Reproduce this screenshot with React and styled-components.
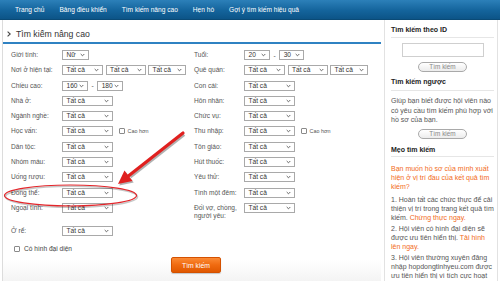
import React from 'react';
import styled, { createGlobalStyle } from 'styled-components';

const Global = createGlobalStyle`
  html, body { margin: 0; padding: 0; background: #fff; overflow: hidden; }
  body { font-family: "Liberation Sans", Arial, sans-serif; }
  * { box-sizing: border-box; }
`;

const Page = styled.div`
  position: relative;
  width: 500px;
  height: 281px;
  overflow: hidden;
  display: flex;
  flex-direction: column;
`;

const NavBar = styled.nav`
  height: 20px;
  flex: none;
  display: flex;
  align-items: center;
  gap: 15px;
  padding-left: 15px;
  background: linear-gradient(#2c80b9, #14649c 55%, #0c5487);
  border-bottom: 1px solid #0a4a76;
`;

const NavItem = styled.a`
  color: #fff;
  font-size: 6.6px;
  text-decoration: none;
  white-space: nowrap;
`;

const Body = styled.div`
  flex: 1;
  display: flex;
  min-height: 0;
`;

const Main = styled.main`
  width: 379px;
  flex: none;
  margin-left: 2px;
  border-left: 1px solid #dcdcdc;
  background: linear-gradient(#fff 0, #fff 240px, #ececec 275px);
  display: flex;
  flex-direction: column;
  & > * { flex-shrink: 0; }
`;

const Title = styled.h1`
  margin: 0;
  display: flex;
  align-items: center;
  gap: 5px;
  padding: 8px 0 2px 4px;
  border-bottom: 2px solid #2f82c2;
  font-size: 8.7px;
  line-height: 12px;
  font-weight: normal;
  color: #333;
`;

const Form = styled.div`
  padding: 6px 0 0 8px;
  display: flex;
  flex-direction: column;
  & > * { flex-shrink: 0; }
`;

const Row = styled.div`
  display: grid;
  grid-template-columns: 51px 132px 50px 1fr;
  height: ${(p) => p.$h || 15.3}px;
  align-items: start;
`;

const Label = styled.span`
  font-size: 6.6px;
  line-height: ${(p) => (p.$multi ? '8.2px' : '10px')};
  color: #555;
  white-space: ${(p) => (p.$multi ? 'normal' : 'nowrap')};
  padding-top: ${(p) => (p.$multi ? '1px' : '0')};
`;

const Cell = styled.div`
  display: flex;
  align-items: center;
  height: 10px;
  gap: 2.5px;
`;

const SelectBox = styled.div`
  width: ${(p) => p.$w}px;
  height: 10px;
  flex: none;
  border: 1px solid #a9a9a9;
  background: #fff;
  display: flex;
  align-items: center;
  justify-content: space-between;
  padding: 0 3px 0 3.5px;
  font-size: 6.6px;
  color: #333;
  line-height: 8px;
`;

const Dash = styled.span`
  font-size: 6.6px;
  color: #555;
  padding: 0 1px;
`;

const Box = styled.span`
  display: inline-block;
  width: 6px;
  height: 6px;
  border: 1px solid #8a8a8a;
  border-radius: 1px;
  background: #fff;
  flex: none;
`;

const CheckSmall = styled.span`
  display: flex;
  align-items: center;
  gap: 3px;
  margin-left: 3px;
  font-size: 5.4px;
  color: #555;
`;

const CheckRow = styled.label`
  height: 15.3px;
  display: flex;
  align-items: center;
  gap: 4px;
  padding-left: 3px;
  font-size: 6.6px;
  color: #444;
`;

const SearchBtn = styled.button`
  align-self: center;
  margin-top: 0.5px;
  width: 50px;
  height: 16px;
  border: 1px solid #d45100;
  border-radius: 2px;
  background: linear-gradient(#fb8a34, #f06a10 50%, #e05800);
  color: #fff;
  font-family: inherit;
  font-size: 6.8px;
  padding: 0;
  box-shadow: 0 1px 1px rgba(0, 0, 0, 0.2);
`;

const Sidebar = styled.aside`
  width: 114px;
  flex: none;
  margin-left: 3px;
  border-left: 1px solid #e2e2e2;
  border-right: 1px solid #e2e2e2;
  padding: 5px 3px 0 6px;
  display: flex;
  flex-direction: column;
  background: #fff;
  & > * { flex-shrink: 0; }
`;

const SideHeading = styled.h3`
  margin: ${(p) => p.$mt || 0}px 0 0;
  font-size: 7px;
  line-height: 10px;
  font-weight: bold;
  color: #222;
  padding-bottom: ${(p) => p.$pb ?? 2}px;
  border-bottom: 1px solid #e6e6e6;
`;

const IdInput = styled.div`
  align-self: center;
  margin-top: 5px;
  width: 82px;
  height: 14px;
  border: 1px solid #cfcfcf;
  background: #fff;
`;

const PillBtn = styled.button`
  align-self: center;
  margin-top: ${(p) => p.$mt || 5}px;
  width: 49px;
  height: 10px;
  padding: 0;
  border: 1px solid #a9a9a9;
  border-radius: 5px;
  background: linear-gradient(#ffffff, #ececec);
  color: #888;
  font-family: inherit;
  font-size: 6.4px;
  line-height: 8px;
`;

const SideText = styled.p`
  margin: ${(p) => p.$mt || 0}px 0 0;
  font-size: 7px;
  line-height: ${(p) => p.$lh || 9}px;
  color: ${(p) => (p.$orange ? '#f26a22' : '#555')};
`;

const Link = styled.span`
  color: #f26a22;
`;

const Overlay = styled.svg`
  position: absolute;
  left: 0;
  top: 0;
  width: 500px;
  height: 281px;
  pointer-events: none;
`;

const Chevron = () => (
  <svg width="5" height="4" viewBox="0 0 5 4">
    <path d="M0.7 1 L2.5 2.8 L4.3 1" fill="none" stroke="#555" strokeWidth="0.9" />
  </svg>
);

const Select = ({ w = 51, children = 'Tất cả' }) => (
  <SelectBox $w={w}>
    <span>{children}</span>
    <Chevron />
  </SelectBox>
);

const Triple = () => (
  <Cell>
    <Select w={41} />
    <Select w={40} />
    <Select w={38} />
  </Cell>
);

export default function App() {
  return (
    <Page>
      <Global />
      <NavBar>
        <NavItem>Trang chủ</NavItem>
        <NavItem>Bảng điều khiển</NavItem>
        <NavItem>Tìm kiếm nâng cao</NavItem>
        <NavItem>Hẹn hò</NavItem>
        <NavItem>Gợi ý tìm kiếm hiệu quả</NavItem>
      </NavBar>
      <Body>
        <Main>
          <Title>
            <svg width="4" height="6" viewBox="0 0 4 6">
              <path d="M0.6 0.6 L3.2 3 L0.6 5.4" fill="none" stroke="#444" strokeWidth="1.1" />
            </svg>
            Tìm kiếm nâng cao
          </Title>
          <Form>
            <Row>
              <Label>Giới tính:</Label>
              <Cell><Select w={27}>Nữ</Select></Cell>
              <Label>Tuổi:</Label>
              <Cell><Select w={26}>20</Select><Dash>-</Dash><Select w={25}>30</Select></Cell>
            </Row>
            <Row>
              <Label>Nơi ở hiện tại:</Label>
              <Triple />
              <Label>Quê quán:</Label>
              <Triple />
            </Row>
            <Row>
              <Label>Chiều cao:</Label>
              <Cell><Select w={26}>160</Select><Dash>-</Dash><Select w={26}>180</Select></Cell>
              <Label>Con cái:</Label>
              <Cell><Select /></Cell>
            </Row>
            <Row>
              <Label>Nhà ở:</Label>
              <Cell><Select /></Cell>
              <Label>Hôn nhân:</Label>
              <Cell><Select /></Cell>
            </Row>
            <Row>
              <Label>Ngành nghề:</Label>
              <Cell><Select /></Cell>
              <Label>Chức vụ:</Label>
              <Cell><Select /></Cell>
            </Row>
            <Row>
              <Label>Học vấn:</Label>
              <Cell><Select /><CheckSmall><Box />Cao hơn</CheckSmall></Cell>
              <Label>Thu nhập:</Label>
              <Cell><Select /><CheckSmall><Box />Cao hơn</CheckSmall></Cell>
            </Row>
            <Row>
              <Label>Dân tộc:</Label>
              <Cell><Select /></Cell>
              <Label>Tôn giáo:</Label>
              <Cell><Select /></Cell>
            </Row>
            <Row>
              <Label>Nhóm máu:</Label>
              <Cell><Select /></Cell>
              <Label>Hút thuốc:</Label>
              <Cell><Select /></Cell>
            </Row>
            <Row>
              <Label>Uống rượu:</Label>
              <Cell><Select /></Cell>
              <Label>Yêu thử:</Label>
              <Cell><Select /></Cell>
            </Row>
            <Row>
              <Label>Đồng thể:</Label>
              <Cell><Select /></Cell>
              <Label>Tình một đêm:</Label>
              <Cell><Select /></Cell>
            </Row>
            <Row $h={23}>
              <Label>Ngoại tình:</Label>
              <Cell><Select /></Cell>
              <Label $multi>Đối vợ, chồng, người yêu:</Label>
              <Cell><Select /></Cell>
            </Row>
            <Row>
              <Label>Ở rể:</Label>
              <Cell><Select /></Cell>
            </Row>
            <CheckRow><Box />Có hình đại diện</CheckRow>
            <SearchBtn>Tìm kiếm</SearchBtn>
          </Form>
        </Main>
        <Sidebar>
          <SideHeading>Tìm kiếm theo ID</SideHeading>
          <IdInput />
          <PillBtn>Tìm kiếm</PillBtn>
          <SideHeading $mt={5} $pb={3}>Tìm kiếm ngược</SideHeading>
          <SideText $mt={5} $lh={9.5}>
            Giúp bạn biết được hội viên nào có yêu cầu tìm kiếm phù hợp với hồ sơ của bạn.
          </SideText>
          <PillBtn $mt={4}>Tìm kiếm</PillBtn>
          <SideHeading $mt={6} $pb={1}>Mẹo tìm kiếm</SideHeading>
          <SideText $mt={7} $orange>
            Bạn muốn hồ sơ của mình xuất hiện ở vị trí đầu của kết quả tìm kiếm?
          </SideText>
          <SideText $mt={4}>
            1. Hoàn tất các chức thực để cải thiện vị trí trong trang kết quả tìm kiếm. <Link>Chứng thực ngay.</Link>
          </SideText>
          <SideText $mt={2}>
            2. Hội viên có hình đại diện sẽ được ưu tiên hiển thị. <Link>Tải hình lên ngay.</Link>
          </SideText>
          <SideText $mt={2}>
            3. Hội viên thường xuyên đăng nhập hopdongtinhyeu.com được ưu tiên hiển thị vì tích cực hoạt động. <Link>Đăng kí ngay</Link> nếu chưa là hội viên.
          </SideText>
        </Sidebar>
      </Body>
      <Overlay viewBox="0 0 500 281">
        <ellipse cx="71.5" cy="196.8" rx="66" ry="10.5" fill="none" stroke="rgba(0,0,0,0.22)" strokeWidth="1.6" />
        <ellipse cx="70.5" cy="195.5" rx="66" ry="10.5" fill="none" stroke="#e3262b" strokeWidth="1.2" />
        <g transform="translate(1.2,1.6)" opacity="0.3">
          <line x1="183" y1="133" x2="129" y2="175.5" stroke="#000" strokeWidth="3.2" />
          <polygon points="118,184 132.5,181 124.5,170.5" fill="#000" />
        </g>
        <line x1="183" y1="133" x2="129" y2="175.5" stroke="#e0201f" strokeWidth="3.2" strokeLinecap="round" />
        <polygon points="118,184 132.5,181 124.5,170.5" fill="#e0201f" />
      </Overlay>
    </Page>
  );
}
